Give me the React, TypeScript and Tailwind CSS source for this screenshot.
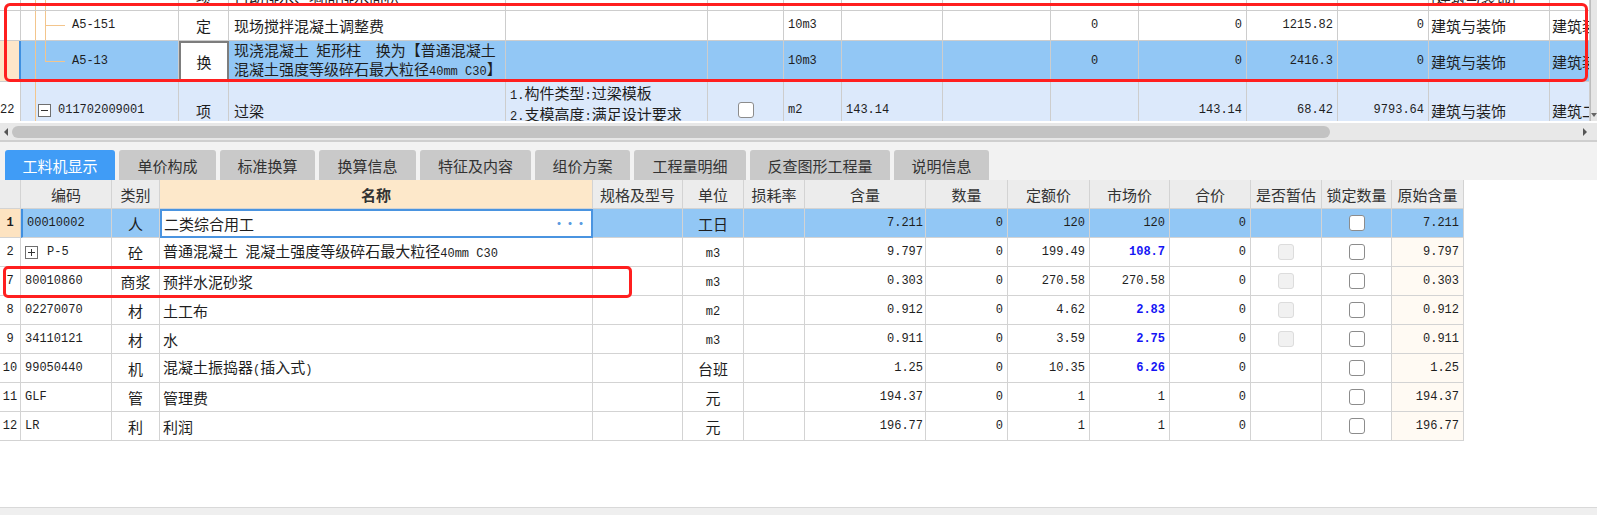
import React from "react";

const MONO = "font-['Liberation_Mono','Noto_Sans_CJK_SC',monospace] text-[12px]";

// ascii runs in mono 12px, CJK in the body size
function Mix({ s }: { s: string }) {
  const parts = s.split(/([\x20-\x7e]+)/).filter(Boolean);
  return (
    <span className="whitespace-pre">
      {parts.map((p, i) =>
        /^[\x20-\x7e]+$/.test(p) ? (
          <span key={i} className={MONO}>{p}</span>
        ) : (
          <span key={i}>{p}</span>
        )
      )}
    </span>
  );
}

const UCOLS =
  "grid grid-cols-[21px_158px_50px_277px_202px_76px_58px_101px_108px_88px_108px_91px_91px_121px_40px]";
const LCOLS =
  "grid grid-cols-[21px_91px_48px_433px_90px_61px_61px_121px_82px_82px_80px_81px_71px_70px_72px] w-[1464px]";

const uc = "border-r border-b border-[#cdcdcd] flex items-center overflow-hidden whitespace-nowrap";
const lc = "border-r border-b border-[#d3d3d3] flex items-center overflow-hidden whitespace-nowrap";
const TREE = "border-[#f3c58c]";

function CheckBox({ disabled }: { disabled?: boolean }) {
  return disabled ? (
    <div className="w-[16px] h-[16px] rounded-[3px] border border-[#dcdcdc] bg-[#f1f1f1]" />
  ) : (
    <div className="w-[16px] h-[16px] rounded-[3px] border border-[#8c8c8c] bg-white" />
  );
}

function SignBox({ sign }: { sign: "+" | "-" }) {
  return (
    <div className="w-[13px] h-[13px] border border-[#6f6f6f] bg-white flex items-center justify-center">
      <div className="relative w-[7px] h-[7px] flex items-center justify-center">
        <div className="w-[7px] h-px bg-[#333]" />
        {sign === "+" && <div className="absolute w-px h-[7px] bg-[#333]" />}
      </div>
    </div>
  );
}

const tabs = [
  { t: "工料机显示", w: "w-[110px]", on: true },
  { t: "单价构成", w: "w-[97px]" },
  { t: "标准换算", w: "w-[95px]" },
  { t: "换算信息", w: "w-[97px]" },
  { t: "特征及内容", w: "w-[111px]" },
  { t: "组价方案", w: "w-[95px]" },
  { t: "工程量明细", w: "w-[112px]" },
  { t: "反查图形工程量", w: "w-[140px]" },
  { t: "说明信息", w: "w-[95px]" },
];

const heads = ["", "编码", "类别", "名称", "规格及型号", "单位", "损耗率", "含量", "数量", "定额价", "市场价", "合价", "是否暂估", "锁定数量", "原始含量"];

type Row = {
  n: string; code: string; plus?: boolean; type: string; name: string; unit: string;
  hl: string; de: string; mk: string; blue?: boolean; zg: "none" | "dis"; orig: string; sel?: boolean;
};

const rows: Row[] = [
  { n: "1", code: "00010002", type: "人", name: "二类综合用工", unit: "工日", hl: "7.211", de: "120", mk: "120", zg: "none", orig: "7.211", sel: true },
  { n: "2", code: "P-5", plus: true, type: "砼", name: "普通混凝土 混凝土强度等级碎石最大粒径40mm C30", unit: "m3", hl: "9.797", de: "199.49", mk: "108.7", blue: true, zg: "dis", orig: "9.797" },
  { n: "7", code: "80010860", type: "商浆", name: "预拌水泥砂浆", unit: "m3", hl: "0.303", de: "270.58", mk: "270.58", zg: "dis", orig: "0.303" },
  { n: "8", code: "02270070", type: "材", name: "土工布", unit: "m2", hl: "0.912", de: "4.62", mk: "2.83", blue: true, zg: "dis", orig: "0.912" },
  { n: "9", code: "34110121", type: "材", name: "水", unit: "m3", hl: "0.911", de: "3.59", mk: "2.75", blue: true, zg: "dis", orig: "0.911" },
  { n: "10", code: "99050440", type: "机", name: "混凝土振捣器(插入式)", unit: "台班", hl: "1.25", de: "10.35", mk: "6.26", blue: true, zg: "none", orig: "1.25" },
  { n: "11", code: "GLF", type: "管", name: "管理费", unit: "元", hl: "194.37", de: "1", mk: "1", zg: "none", orig: "194.37" },
  { n: "12", code: "LR", type: "利", name: "利润", unit: "元", hl: "196.77", de: "1", mk: "1", zg: "none", orig: "196.77" },
];

function LowerRow({ r }: { r: Row }) {
  const bg = r.sel ? "bg-[#92c7f5]" : "bg-white";
  return (
    <div className={`${LCOLS} h-[29px]`}>
      <div className={`${lc} justify-center ${MONO} ${r.sel ? "bg-[#fde3c1] font-bold" : "bg-white"}`}>{r.n}</div>
      <div className={`${lc} ${bg} pl-[4px] gap-[9px] ${MONO} ${r.sel ? "border-l-2 border-l-[#3f8fe0]" : ""}`}>
        {r.plus && <SignBox sign="+" />}
        {r.code}
      </div>
      <div className={`${lc} ${bg} justify-center`}><Mix s={r.type} /></div>
      {r.sel ? (
        <div className="border-2 border-[#4a94e0] bg-white flex items-center justify-between pl-[2px] pr-[5px]">
          <Mix s={r.name} />
          <span className="text-[#5b9be0] text-[12px] tracking-[-1px] leading-none font-bold">···</span>
        </div>
      ) : (
        <div className={`${lc} ${bg} pl-[3px]`}><Mix s={r.name} /></div>
      )}
      <div className={`${lc} ${bg}`} />
      <div className={`${lc} ${bg} justify-center`}><Mix s={r.unit} /></div>
      <div className={`${lc} ${bg}`} />
      <div className={`${lc} ${bg} justify-end pr-[2px] ${MONO}`}>{r.hl}</div>
      <div className={`${lc} ${bg} justify-end pr-[4px] ${MONO}`}>0</div>
      <div className={`${lc} ${bg} justify-end pr-[4px] ${MONO}`}>{r.de}</div>
      <div className={`${lc} ${bg} justify-end pr-[4px] ${MONO} ${r.blue ? "font-bold text-[#1414f5]" : ""}`}>{r.mk}</div>
      <div className={`${lc} ${bg} justify-end pr-[4px] ${MONO}`}>0</div>
      <div className={`${lc} ${bg} justify-center`}>{r.zg === "dis" && <CheckBox disabled />}</div>
      <div className={`${lc} ${bg} justify-center`}><CheckBox /></div>
      <div className={`${lc} ${r.sel ? bg : "bg-[#fffaf3]"} justify-end pr-[4px] ${MONO}`}>{r.orig}</div>
    </div>
  );
}

export default function App() {
  return (
    <div className="relative w-[1597px] h-[515px] overflow-hidden bg-[#f2f2f2] font-['Noto_Sans_CJK_SC',sans-serif] text-[15px] leading-[17px] text-[#1e1e1e] flex flex-col">
      {/* upper grid */}
      <div className="h-[121px] flex bg-white overflow-hidden shrink-0">
        <div className="w-[1590px] overflow-hidden">
          {/* row 21, mostly scrolled out */}
          <div className={`${UCOLS} h-[29px] -mt-[18px] bg-white`}>
            <div className={`${uc} ${MONO} pl-[1px]`}>21</div>
            <div className={`${uc} items-stretch pl-[14px]`}>
              <div className={`w-[10px] border-l ${TREE}`} />
              <div className={`w-[20px] border-l ${TREE}`} />
            </div>
            <div className={`${uc} justify-center`}>项</div>
            <div className={`${uc} pl-[5px]`}>自动排水、墙面排水面积</div>
            <div className={uc} />
            <div className={uc} />
            <div className={uc} />
            <div className={uc} />
            <div className={uc} />
            <div className={`${uc} justify-center ${MONO}`}>0</div>
            <div className={`${uc} justify-end pr-[4px] ${MONO}`}>0</div>
            <div className={`${uc} justify-end pr-[4px] ${MONO}`}>0</div>
            <div className={`${uc} justify-end pr-[4px] ${MONO}`}>0</div>
            <div className={`${uc} pl-[2px]`}>[建筑与装饰]</div>
            <div className={uc} />
          </div>

          {/* A5-151 */}
          <div className={`${UCOLS} h-[30px] bg-white`}>
            <div className={uc} />
            <div className={`${uc} items-stretch pl-[14px]`}>
              <div className={`w-[10px] border-l ${TREE}`} />
              <div className={`w-[20px] border-l ${TREE} flex items-center`}>
                <div className="w-full h-px bg-[#f3c58c]" />
              </div>
              <div className={`pl-[7px] flex items-center ${MONO}`}>A5-151</div>
            </div>
            <div className={`${uc} justify-center`}>定</div>
            <div className={`${uc} pl-[5px]`}>现场搅拌混凝土调整费</div>
            <div className={uc} />
            <div className={uc} />
            <div className={`${uc} pl-[4px] ${MONO}`}>10m3</div>
            <div className={uc} />
            <div className={uc} />
            <div className={`${uc} justify-center ${MONO}`}>0</div>
            <div className={`${uc} justify-end pr-[4px] ${MONO}`}>0</div>
            <div className={`${uc} justify-end pr-[4px] ${MONO}`}>1215.82</div>
            <div className={`${uc} justify-end pr-[4px] ${MONO}`}>0</div>
            <div className={`${uc} pl-[2px]`}>建筑与装饰</div>
            <div className={`${uc} pl-[2px]`}>建筑装饰</div>
          </div>

          {/* A5-13 selected */}
          <div className={`${UCOLS} h-[41px] bg-[#92c7f5]`}>
            <div className={`${uc} bg-[#fde6c9] border-r-2 border-r-[#3f8fe0]`} />
            <div className={`${uc} items-stretch pl-[14px]`}>
              <div className={`w-[10px] border-l ${TREE}`} />
              <div className="w-[20px] flex flex-col">
                <div className={`flex-1 border-l border-b ${TREE}`} />
                <div className="flex-1" />
              </div>
              <div className={`pl-[7px] flex items-center ${MONO}`}>A5-13</div>
            </div>
            <div className="border-2 border-[#7d7d7d] bg-white flex items-center justify-center">换</div>
            <div className={`${uc} pl-[5px] whitespace-normal`}>
              <div className="leading-[16px]">
                <div><Mix s="现浇混凝土 矩形柱  换为【普通混凝土" /></div>
                <div><Mix s="混凝土强度等级碎石最大粒径40mm C30】" /></div>
              </div>
            </div>
            <div className={uc} />
            <div className={uc} />
            <div className={`${uc} pl-[4px] ${MONO}`}>10m3</div>
            <div className={uc} />
            <div className={uc} />
            <div className={`${uc} justify-center ${MONO}`}>0</div>
            <div className={`${uc} justify-end pr-[4px] ${MONO}`}>0</div>
            <div className={`${uc} justify-end pr-[4px] ${MONO}`}>2416.3</div>
            <div className={`${uc} justify-end pr-[4px] ${MONO}`}>0</div>
            <div className={`${uc} pl-[2px]`}>建筑与装饰</div>
            <div className={`${uc} pl-[2px]`}>建筑装饰</div>
          </div>

          {/* row 22 */}
          <div className={`${UCOLS} h-[57px] bg-[#dce9fb]`}>
            <div className={`${uc} bg-white ${MONO}`}>22</div>
            <div className={`${uc} items-stretch pl-[14px]`}>
              <div className={`w-[3px] border-l ${TREE}`} />
              <div className={`flex items-center gap-[7px] ${MONO}`}>
                <SignBox sign="-" />
                011702009001
              </div>
            </div>
            <div className={`${uc} justify-center`}>项</div>
            <div className={`${uc} pl-[5px]`}>过梁</div>
            <div className={`${uc} items-start pl-[4px] pt-[2px] leading-[17px]`}>
              <div>
                <div><Mix s="1.构件类型:过梁模板" /></div>
                <div><Mix s="2.支模高度:满足设计要求" /></div>
              </div>
            </div>
            <div className={`${uc} justify-center`}><CheckBox /></div>
            <div className={`${uc} pl-[4px] ${MONO}`}>m2</div>
            <div className={`${uc} pl-[4px] ${MONO}`}>143.14</div>
            <div className={uc} />
            <div className={uc} />
            <div className={`${uc} justify-end pr-[4px] ${MONO}`}>143.14</div>
            <div className={`${uc} justify-end pr-[4px] ${MONO}`}>68.42</div>
            <div className={`${uc} justify-end pr-[4px] ${MONO}`}>9793.64</div>
            <div className={`${uc} pl-[2px]`}>建筑与装饰</div>
            <div className={`${uc} pl-[2px]`}>建筑二次</div>
          </div>
        </div>
        {/* vertical scrollbar strip */}
        <div className="w-[7px] bg-[#e6e6e6] border-l border-[#bdbdbd] flex flex-col justify-end items-center pb-[4px]">
          <div className="w-0 h-0 border-x-[3px] border-x-transparent border-t-[4px] border-t-[#666]" />
        </div>
      </div>

      {/* horizontal scrollbar */}
      <div className="h-[21px] shrink-0 bg-white pt-[2px] border-b-2 border-[#cfcfcf]">
        <div className="h-[17px] bg-[#e8e8e8] flex items-center">
          <div className="w-[12px] flex justify-center">
            <div className="w-0 h-0 border-y-[4px] border-y-transparent border-r-[4px] border-r-[#555]" />
          </div>
          <div className="w-[1318px] h-[12px] rounded-full bg-[#c3c3c3]" />
          <div className="flex-1" />
          <div className="w-[16px] mr-[4px] flex justify-center">
            <div className="w-0 h-0 border-y-[4px] border-y-transparent border-l-[4px] border-l-[#555]" />
          </div>
        </div>
      </div>

      {/* tabs */}
      <div className="h-[38px] shrink-0 bg-[#f2f2f2] flex items-end pl-[5px] gap-[4px]">
        {tabs.map((t) => (
          <div
            key={t.t}
            className={`${t.w} h-[30px] rounded-t-[3px] flex items-center justify-center text-[15px] ${
              t.on ? "bg-[#409cf6] text-white" : "bg-[#c9c9c9] text-[#333]"
            }`}
          >
            {t.t}
          </div>
        ))}
      </div>

      {/* lower grid */}
      <div className="h-[327px] shrink-0 bg-white">
        <div className={`${LCOLS} h-[29px]`}>
          {heads.map((h, i) => (
            <div
              key={i}
              className={`${lc} justify-center text-[#333] ${
                i === 3 ? "bg-[#fde8ca] font-bold text-[#222]" : "bg-[#ececec]"
              }`}
            >
              {h}
            </div>
          ))}
        </div>
        {rows.map((r) => (
          <LowerRow key={r.n} r={r} />
        ))}
      </div>
      <div className="flex-1 bg-[#efefef] border-t border-[#d9d9d9]" />

      {/* red annotation boxes */}
      <div className="absolute left-[4px] top-[3px] w-[1584px] h-[79px] border-[3px] border-[#ff1f1f] rounded-[6px] pointer-events-none" />
      <div className="absolute left-[3px] top-[266px] w-[629px] h-[32px] border-[3px] border-[#ff1f1f] rounded-[5px] pointer-events-none" />
    </div>
  );
}
